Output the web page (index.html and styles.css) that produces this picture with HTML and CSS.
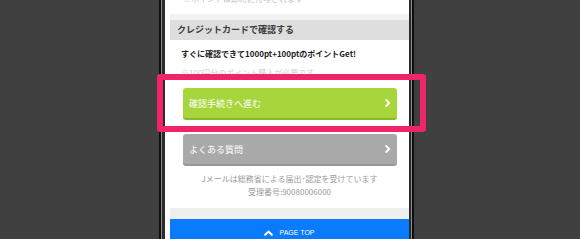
FILE: index.html
```html
<!DOCTYPE html>
<html lang="ja">
<head>
<meta charset="utf-8">
<title>Jメール</title>
<link rel="stylesheet" href="styles.css">
</head>
<body>
<div class="stage">
  <div class="phone">
    <div class="phone-grey">
      <div class="phone-dark">
        <div class="screen">
          <div class="top-cut"><span>※ポイントは即時に付与されます</span></div>
          <div class="strip"></div>
          <div class="band">クレジットカードで確認する</div>
          <div class="section">
            <p class="lead">すぐに確認できて1000pt+100ptのポイントGet!</p>
            <p class="sub">※100円分のポイント購入が必要です</p>
            <a class="btn btn-green"><span>確認手続きへ進む</span>
              <svg class="chev" width="6" height="8" viewBox="0 0 6 8"><polyline points="1.2,1 4.2,4 1.2,7" fill="none" stroke="#fff" stroke-width="1.8" stroke-linecap="round" stroke-linejoin="round"/></svg>
            </a>
            <a class="btn btn-grey"><span>よくある質問</span>
              <svg class="chev" width="6" height="8" viewBox="0 0 6 8"><polyline points="1.2,1 4.2,4 1.2,7" fill="none" stroke="#fff" stroke-width="1.8" stroke-linecap="round" stroke-linejoin="round"/></svg>
            </a>
            <p class="note">Jメールは総務省による届出･認定を受けています</p>
            <p class="note note2">受理番号:90080006000</p>
          </div>
          <div class="strip2"></div>
          <div class="pagetop">
            <svg width="9" height="6" viewBox="0 0 9 6"><polyline points="1.2,4.8 4.5,1.5 7.8,4.8" fill="none" stroke="#fff" stroke-width="2" stroke-linecap="round" stroke-linejoin="round"/></svg>
            <span>PAGE TOP</span>
          </div>
        </div>
      </div>
    </div>
  </div>
  <div class="highlight"></div>
</div>
</body>
</html>
```

FILE: styles.css
```css
html, body {
  margin: 0;
  padding: 0;
  background: #404040;
  overflow: hidden;
}
body {
  font-family: "Noto Sans CJK JP", "Noto Sans", sans-serif;
}
.stage {
  position: relative;
  width: 580px;
  height: 239px;
  overflow: hidden;
}
.phone {
  margin-left: 159px;
  width: 251px;
  height: 260px;
  border-left: 2px solid #0e0e0e;
  border-right: 2px solid #0e0e0e;
}
.phone-grey {
  height: 100%;
  border-left: 1px solid #8a8a8a;
  border-right: 1px solid #8a8a8a;
}
.phone-dark {
  height: 100%;
  border-left: 3px solid #2b2b2b;
  border-right: 2px solid #2b2b2b;
}
.screen {
  height: 100%;
  background: #fff;
  padding-left: 5px;
  display: flex;
  flex-direction: column;
}
.top-cut {
  height: 14px;
  overflow: hidden;
  padding-left: 13px;
  font-size: 8px;
  color: #c4c4c4;
}
.top-cut span {
  display: block;
  margin-top: -7px;
  line-height: 12px;
}
.strip {
  height: 6px;
  background: #f2f2f2;
}
.band {
  height: 20px;
  line-height: 20px;
  background: #dedede;
  padding-left: 7px;
  font-size: 9px;
  font-weight: bold;
  color: #3c3c3c;
}
.section {
  padding: 8px 0 10px;
  display: flex;
  flex-direction: column;
}
.section p {
  margin: 0;
}
.lead {
  padding-left: 11px;
  font-size: 8px;
  line-height: 12px;
  font-weight: bold;
  color: #222;
}
.sub {
  margin-top: 7px !important;
  padding-left: 11px;
  font-size: 8px;
  line-height: 12px;
  color: #cfcfcf;
}
.btn {
  margin-left: 13px;
  width: 214px;
  height: 32px;
  box-sizing: border-box;
  border-radius: 3px;
  display: flex;
  align-items: center;
  justify-content: space-between;
  padding: 0 6px 0 6px;
  color: #fff;
  font-size: 9px;
}
.btn-green {
  margin-top: 9px;
  background: #a6d63b;
  border-bottom: 2px solid #8cb82c;
}
.btn-grey {
  margin-top: 14px;
  background: #a9a9a9;
  border-bottom: 2px solid #979797;
}
.chev {
  display: block;
}
.note {
  text-align: center;
  font-size: 8px;
  line-height: 12px;
  color: #9a9a9a;
  margin-top: 7px !important;
}
.note2 {
  margin-top: 0 !important;
  line-height: 13px;
}
.strip2 {
  height: 11px;
  background: #efefef;
}
.pagetop {
  flex: 1;
  background: #0a7bfc;
  display: flex;
  justify-content: center;
  align-items: flex-start;
  padding-top: 11px;
  gap: 6px;
  color: #fff;
  font-family: "Liberation Sans", sans-serif;
  font-size: 7px;
  line-height: 6px;
}
.pagetop svg {
  display: block;
}
.highlight {
  position: absolute;
  left: 157px;
  top: 74px;
  width: 269px;
  height: 58px;
  box-sizing: border-box;
  border: 6px solid #f0246b;
  border-radius: 3px;
}
```
